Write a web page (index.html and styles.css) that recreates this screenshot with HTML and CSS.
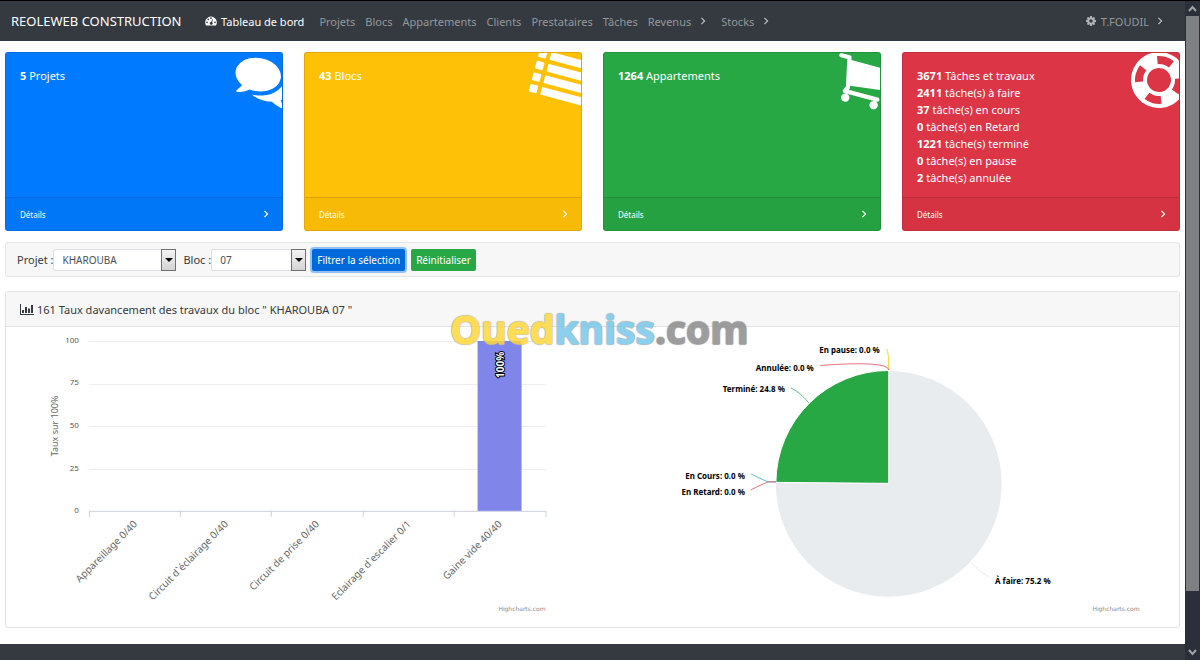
FILE: index.html
```html
<!DOCTYPE html>
<html lang="fr">
<head>
<meta charset="utf-8">
<meta name="viewport" content="width=device-width, initial-scale=1">
<title>Reoleweb Construction - Tableau de bord</title>
<link rel="stylesheet" href="styles.css">
</head>
<body>
<svg class="sprite" aria-hidden="true">
  <symbol id="angle" viewBox="0 0 6 10"><path d="M1 1l4 4-4 4" fill="none" stroke="currentColor" stroke-width="1.4"/></symbol>
</svg>
<div class="page">
  <header class="navbar">
    <a class="brand" href="#">REOLEWEB CONSTRUCTION</a>
    <nav class="menu" aria-label="Navigation principale">
      <a class="link active" href="#">
        <svg class="dial" viewBox="0 0 24 20" fill="currentColor"><path fill-rule="evenodd" d="M12 1A12 12 0 0 0 2 19h20A12 12 0 0 0 12 1zM4 11a1.7 1.7 0 1 1 0 3.400 1.700 1.700 0 0 1 0-3.400zM6.500 5a1.700 1.700 0 1 1 0 3.400 1.700 1.700 0 0 1 0-3.400zM12 2.700a1.700 1.700 0 1 1 0 3.400 1.700 1.700 0 0 1 0-3.400zM20 11a1.700 1.700 0 1 1 0 3.400 1.700 1.700 0 0 1 0-3.400zM14.500 6.500l1.500.5-2 5.500a2.800 2.800 0 1 1-1.700-.5z"/></svg>
        Tableau de bord</a>
      <a class="link" href="#">Projets</a>
      <a class="link" href="#">Blocs</a>
      <a class="link" href="#">Appartements</a>
      <a class="link" href="#">Clients</a>
      <a class="link" href="#">Prestataires</a>
      <a class="link" href="#">Tâches</a>
      <a class="link more" href="#">Revenus <svg class="angle"><use href="#angle"/></svg></a>
      <a class="link more" href="#">Stocks <svg class="angle"><use href="#angle"/></svg></a>
    </nav>
    <a class="link more user" href="#">
      <svg class="cog" viewBox="128 128 1536 1536" fill="currentColor"><path d="M1152 896q0-106-75-181t-181-75-181 75-75 181 75 181 181 75 181-75 75-181zm512-109v222q0 12-8 23t-20 13l-185 28q-19 54-39 91 35 50 107 138 10 12 10 25t-9 23q-27 37-99 108t-94 71q-12 0-26-9l-138-108q-44 23-91 38-16 136-29 186-7 28-36 28h-222q-14 0-24.500-8.500t-11.500-21.500l-28-184q-49-16-90-37l-141 107q-10 9-25 9-14 0-25-11-126-114-165-168-7-10-7-23 0-12 8-23 15-21 51-66.500t54-70.500q-27-50-41-99l-183-27q-13-2-21-12.500t-8-23.500v-222q0-12 8-23t19-13l186-28q14-46 39-92-40-57-107-138-10-12-10-24 0-10 9-23 26-36 98.500-107.500t94.500-71.500q13 0 26 10l138 107q44-23 91-38 16-136 29-186 7-28 36-28h222q14 0 24.500 8.500t11.500 21.500l28 184q49 16 90 37l142-107q9-9 24-9 13 0 25 10 129 119 165 170 7 8 7 22 0 12-8 23-15 21-51 66.500t-54 70.500q26 50 41 98l183 28q13 2 21 12.500t8 23.500z"/></svg>
      T.FOUDIL <svg class="angle"><use href="#angle"/></svg></a>
  </header>

  <main class="content">
    <section class="stats">
      <article class="stat blue">
        <div class="stat-body"><p><b>5</b> Projets</p></div>
        <a class="stat-foot" href="#">Détails <svg class="angle"><use href="#angle"/></svg></a>
        <svg class="stat-icon" viewBox="0 0 56 60"><g transform="translate(14 -7) rotate(10) scale(.0325)" fill="#fff"><path d="M1408 768q0 139-94 257t-256.500 186.500-353.500 68.500q-86 0-176-16-124 88-278 128-36 9-86 16h-3q-11 0-20.500-8t-11.500-21q-1-3-1-6.500t.5-6.500 2-6l2.500-5 3.500-5.500 4-5 4.500-5 4-4.500q5-6 23-25t26-29.500 22.500-29 25-38.500 20.500-44q-124-72-195-177t-71-224q0-139 94-257t256.500-186.500 353.500-68.500 353.500 68.500 256.500 186.500 94 257zm384 256q0 120-71 224.500t-195 176.500q10 24 20.500 44t25 38.500 22.500 29 26 29.500 23 25q1 1 4 4.500t4.500 5 4 5 3.500 5.500l2.500 5 2 6 .5 6.500-1 6.500q-3 14-13 22t-22 7q-50-7-86-16-154-40-278-128-90 16-176 16-271 0-472-132 58 4 88 4 161 0 309-45t264-129q125-92 192-212t67-254q0-77-23-152 129 71 204 178t75 230z"/></g></svg>
      </article>
      <article class="stat yellow">
        <div class="stat-body"><p><b>43</b> Blocs</p></div>
        <a class="stat-foot" href="#">Détails <svg class="angle"><use href="#angle"/></svg></a>
        <svg class="stat-icon" viewBox="0 0 56 60"><g transform="translate(15 -4) rotate(15)" fill="#fff"><rect width="8" height="8" rx="1"/><rect x="12" width="46" height="8" rx="1"/><rect y="12" width="8" height="8" rx="1"/><rect x="12" y="12" width="46" height="8" rx="1"/><rect y="24" width="8" height="8" rx="1"/><rect x="12" y="24" width="46" height="8" rx="1"/><rect y="36" width="8" height="8" rx="1"/><rect x="12" y="36" width="46" height="8" rx="1"/></g></svg>
      </article>
      <article class="stat green">
        <div class="stat-body"><p><b>1264</b> Appartements</p></div>
        <a class="stat-foot" href="#">Détails <svg class="angle"><use href="#angle"/></svg></a>
        <svg class="stat-icon" viewBox="0 0 56 60"><g transform="translate(16 -9) rotate(15) scale(.0328)" fill="#fff"><path d="M704 1536q0 52-38 90t-90 38-90-38-38-90 38-90 90-38 90 38 38 90zm896 0q0 52-38 90t-90 38-90-38-38-90 38-90 90-38 90 38 38 90zm128-1088v512q0 24-16.500 42.500t-40.500 21.500l-1044 122q13 60 13 70 0 16-24 64h920q26 0 45 19t19 45-19 45-45 19h-1024q-26 0-45-19t-19-45q0-11 8-31.500t16-36 21.500-40 15.500-29.500l-177-823h-204q-26 0-45-19t-19-45 19-45 45-19h256q16 0 28.500 6.500t19.500 15.500 13 24.500 8 26 5.500 29.500 4.500 26h1201q26 0 45 19t19 45z"/></g></svg>
      </article>
      <article class="stat red">
        <div class="stat-body">
          <p><b>3671</b> Tâches et travaux</p>
          <p><b>2411</b> tâche(s) à faire</p>
          <p><b>37</b> tâche(s) en cours</p>
          <p><b>0</b> tâche(s) en Retard</p>
          <p><b>1221</b> tâche(s) terminé</p>
          <p><b>0</b> tâche(s) en pause</p>
          <p><b>2</b> tâche(s) annulée</p>
        </div>
        <a class="stat-foot" href="#">Détails <svg class="angle"><use href="#angle"/></svg></a>
        <svg class="stat-icon" viewBox="0 0 56 60"><g transform="translate(36 27) rotate(15)"><circle r="28" fill="#fff"/><circle r="12" fill="#dc3545"/><circle r="20" fill="none" stroke="#dc3545" stroke-width="8" stroke-dasharray="15 16.416" stroke-dashoffset="7.500"/></g></svg>
      </article>
    </section>

    <form class="filters">
      <label for="projet">Projet :</label>
      <span class="pick"><select id="projet" class="wide"><option>KHAROUBA</option></select><span class="drop"></span></span>
      <label for="bloc" class="second">Bloc :</label>
      <span class="pick"><select id="bloc" class="narrow"><option>07</option></select><span class="drop"></span></span>
      <button type="button" class="btn primary">Filtrer la sélection</button>
      <button type="button" class="btn success">Réinitialiser</button>
    </form>

    <section class="card">
      <h2 class="card-head">
        <svg class="bars" viewBox="0 0 14 11" fill="currentColor"><path d="M0 0h1v10h13v1H0zM2 6h2v3H2zM5 3h2v6H5zM8 4.500h2V9H8zM11 1h2v8h-2z"/></svg>
        161 Taux davancement des travaux du bloc " KHAROUBA 07 "</h2>
      <div class="charts">
        <svg class="chart" viewBox="0 0 587 300" role="img" aria-label="Taux sur 100%">
          <path class="grid" d="M83 14.500h457M83 57.500h457M83 99.500h457M83 142.500h457"/>
          <path class="axis" d="M83 184.500h457.500v6M83.500 184v6M174.500 184v6M265.500 184v6M357.500 184v6M448.500 184v6"/>
          <rect x="472" y="14" width="44" height="170" fill="#8085e9"/>
          <g class="tick">
            <text x="73" y="16">100</text><text x="73" y="58">75</text><text x="73" y="101">50</text><text x="73" y="144">25</text><text x="73" y="186">0</text>
          </g>
          <text class="ytitle" transform="translate(52 99) rotate(-90)">Taux sur 100%</text>
          <g class="cat">
            <text transform="translate(132 198) rotate(-45)">Appareillage 0/40</text>
            <text transform="translate(223 198) rotate(-45)">Circuit d`éclairage 0/40</text>
            <text transform="translate(314 198) rotate(-45)">Circuit de prise 0/40</text>
            <text transform="translate(406 198) rotate(-45)">Eclairage d`escalier 0/1</text>
            <text transform="translate(497 198) rotate(-45)">Gaine vide 40/40</text>
          </g>
          <text class="value" transform="translate(498 51) rotate(-90)">100%</text>
          <text class="credit" x="540" y="284">Highcharts.com</text>
        </svg>
        <svg class="chart" viewBox="0 0 587 300" role="img" aria-label="Répartition des tâches">
          <circle cx="296" cy="157" r="113" fill="#e9ecef"/>
          <path d="M296 156.500V43.500A113 113 0 0 0 183 155.500z" fill="#28a745" stroke="#fff"/>
          <g fill="none">
            <path d="M294 22q2 3 2 21" stroke="#ffc107" stroke-opacity=".8"/>
            <path d="M227 38.500q68-5 69 4.500" stroke="#dc3545" stroke-opacity=".7"/>
            <path d="M198 61q8 3 18 15" stroke="#28a745" stroke-opacity=".7"/>
            <path d="M158 147q16 8 18 8h7" stroke="#17a2b8" stroke-opacity=".7"/>
            <path d="M158 163q16-8 18-8h7" stroke="#dc3545" stroke-opacity=".7"/>
            <path d="M378 235q6 8 18 15" stroke="#e9ecef"/>
          </g>
          <g class="slice">
            <text x="287" y="26">En pause: 0.0 %</text>
            <text x="221" y="44">Annulée: 0.0 %</text>
            <text x="192" y="65">Terminé: 24.8 %</text>
            <text x="152" y="152">En Cours: 0.0 %</text>
            <text x="152" y="168">En Retard: 0.0 %</text>
            <text x="458" y="257">À faire: 75.2 %</text>
          </g>
          <text class="credit" x="547" y="284">Highcharts.com</text>
        </svg>
      </div>
      <div class="watermark"><span class="wm-yellow">Oued</span><span class="wm-blue">kniss</span><span class="wm-grey">.com</span></div>
    </section>
  </main>
  <footer class="footer"></footer>
</div>
<div class="scroll" aria-hidden="true">
  <svg class="scroll-end" viewBox="0 0 15 15"><path d="M4 10l3.500-4L11 10"/></svg>
  <div class="thumb"></div>
  <svg class="scroll-end" viewBox="0 0 15 15"><path d="M4 5l3.500 4L11 5"/></svg>
</div>
</body>
</html>
```
FILE: styles.css
```css
* { box-sizing: border-box; }
body {
  margin: 0;
  min-height: 100vh;
  display: flex;
  font: 11px/17px "Noto Sans", "Open Sans", sans-serif;
  color: #343a40;
  background: #fff;
}
a { color: inherit; text-decoration: none; }
p, h2 { margin: 0; }
.sprite { position: absolute; width: 0; height: 0; }
.page { flex: 1; min-width: 0; display: flex; flex-direction: column; }
.angle { width: 6px; height: 8px; flex: none; }

.navbar {
  display: flex;
  align-items: center;
  height: 41px;
  padding: 0 22px 0 11px;
  border-top: 1px solid #000;
  background: #343a40;
  color: #94989b;
}
.brand { font-size: 13px; color: #fff; width: 194px; white-space: nowrap; }
.menu { display: flex; flex: 1; gap: 10px; }
.link { display: flex; align-items: center; white-space: nowrap; }
.active { color: #fff; gap: 4px; margin-right: 5px; }
.more { gap: 9px; padding-right: 5px; }
.more .angle { color: #c0c3c6; }
.user { gap: 8px; padding: 0; }
.dial { width: 12px; height: 10px; }
.cog { width: 10px; height: 10px; color: #b0b3b6; margin-right: -3px; }

.content { flex: 1; padding: 11px 5px 16px; }
.stats { display: grid; grid-template-columns: repeat(4, 1fr); gap: 21px; }
.stat {
  position: relative;
  display: flex;
  flex-direction: column;
  min-height: 179px;
  overflow: hidden;
  border: 1px solid rgba(0, 0, 0, .12);
  border-radius: 3px;
  color: #fff;
}
.blue { background: #007bff; }
.yellow { background: #ffc107; }
.green { background: #28a745; }
.red { background: #dc3545; }
.stat-body { flex: 1; padding: 14px 14px 11px; }
.stat-foot {
  display: flex;
  justify-content: space-between;
  align-items: center;
  height: 33px;
  padding: 0 13px 0 14px;
  border-top: 1px solid rgba(0, 0, 0, .12);
  background: rgba(0, 0, 0, .03);
  font-size: 8px;
}
.stat-icon { position: absolute; top: 0; right: 0; width: 56px; height: 60px; }

.filters {
  display: flex;
  align-items: center;
  height: 35px;
  margin: 11px 0 14px;
  padding: 0 11px;
  border: 1px solid #e5e5e5;
  border-radius: 3px;
  background: #f7f7f7;
}
.second { margin-left: 7px; }
.pick { position: relative; display: flex; }
.pick select {
  appearance: none;
  height: 22px;
  padding: 0 8px;
  border: 1px solid #dcdfe2;
  border-radius: 2px;
  background: #fff;
  color: #495057;
  font: 10px/20px "Noto Sans", sans-serif;
}
.wide { width: 123px; }
.narrow { width: 95px; }
.drop {
  position: absolute;
  top: 0;
  right: 0;
  width: 15px;
  height: 22px;
  border: 1px solid #707070;
  background: linear-gradient(#f4f4f4, #d4d4d4);
  pointer-events: none;
}
.drop::after {
  content: "";
  position: absolute;
  top: 8px;
  left: 3px;
  border: 4px solid transparent;
  border-top-color: #000;
  border-bottom: 0;
}
.btn {
  height: 22px;
  padding: 0 5px;
  border: 0;
  border-radius: 2px;
  color: #fff;
  font: 10px/20px "Noto Sans", sans-serif;
  white-space: nowrap;
}
.primary { margin: 0 6px; background: #0069d9; box-shadow: 0 0 0 2px #8fc1f8; }
.success { background: #28a745; }

.card { position: relative; border: 1px solid #e2e2e2; border-radius: 3px; }
.card-head {
  display: flex;
  align-items: center;
  gap: 3px;
  height: 35px;
  padding: 0 14px;
  border-bottom: 1px solid #e2e2e2;
  background: #f7f7f7;
  font-size: 11px;
  font-weight: 400;
}
.bars { width: 14px; height: 11px; }
.charts { display: grid; grid-template-columns: 1fr 1fr; }
.chart { display: block; width: 100%; font-family: "Noto Sans", sans-serif; }
.grid { stroke: #ededed; fill: none; }
.axis { stroke: #ccd0dd; fill: none; }
.tick { font-size: 8px; fill: #555; text-anchor: end; }
.ytitle { font-size: 9px; fill: #666; text-anchor: middle; }
.cat { font-size: 10px; fill: #666; text-anchor: end; }
.value { font-size: 10px; font-weight: 700; fill: #fff; stroke: #000; stroke-width: 2px; paint-order: stroke; }
.credit { font-size: 6px; fill: #888; text-anchor: end; font-family: "DejaVu Sans", sans-serif; }
.slice { font-size: 8px; font-weight: 700; fill: #000; text-anchor: end; }
.watermark {
  position: absolute;
  top: 12px;
  left: 444px;
  font: 700 39px/50px "Open Sans", sans-serif;
  opacity: .85;
  -webkit-text-stroke: 1px currentColor;
  text-shadow: 1px 0 1px #aaa, -1px 0 1px #aaa, 0 1px 1px #aaa, 0 -1px 1px #aaa;
}
.wm-yellow { color: #ffd83a; }
.wm-blue { color: #78c8ea; }
.wm-grey { color: #8c8c8c; }

.footer { height: 16px; background: #343a40; }

.scroll {
  position: sticky;
  top: 0;
  display: flex;
  flex-direction: column;
  justify-content: space-between;
  width: 15px;
  height: 100vh;
  border-top: 1px solid #000;
  background: #2b2f3a;
}
.scroll-end { width: 15px; height: 15px; fill: none; stroke: #a0a2a6; stroke-width: 2; }
.thumb { width: 13px; height: 575px; margin: 0 1px auto; background: #7f8083; }
```
